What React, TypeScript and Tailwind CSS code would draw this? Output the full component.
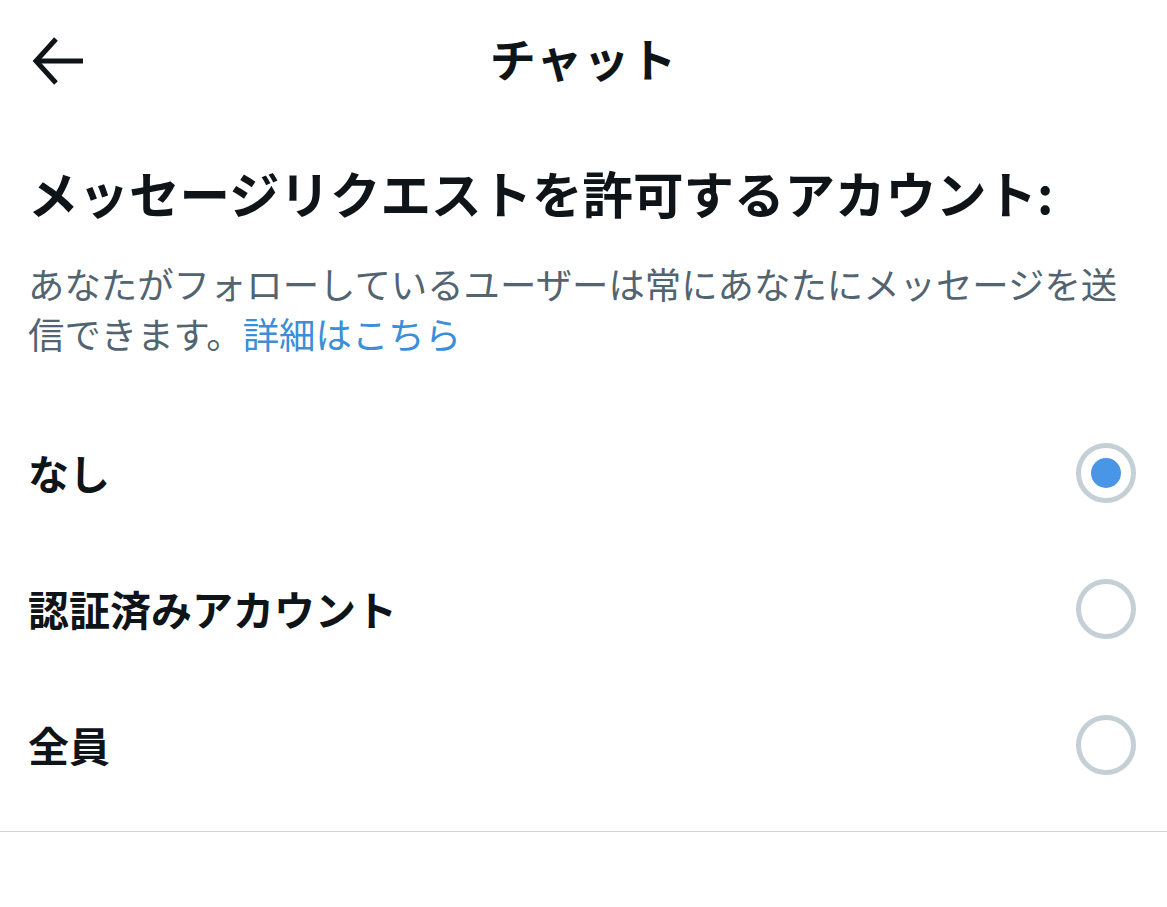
import React from "react";

const options = [
  { label: "なし", checked: true },
  { label: "認証済みアカウント", checked: false },
  { label: "全員", checked: false },
];

function Radio({ checked }: { checked: boolean }) {
  return (
    <div className="w-[60px] h-[60px] rounded-full border-[5.5px] border-[#c4cfd6] flex items-center justify-center">
      {checked && <div className="w-[30px] h-[30px] rounded-full bg-[#4a96e6]" />}
    </div>
  );
}

export default function App() {
  return (
    <div
      className="w-[1167px] h-[907px] bg-white text-[#0f1419] overflow-hidden"
      style={{ fontFamily: '"Noto Sans CJK JP", "Noto Sans", sans-serif' }}
    >
      <header className="relative h-[122px] pb-[8px] flex items-center justify-center">
        <button className="absolute left-[30px] top-[36px] w-[56px] h-[50px] flex items-center justify-center">
          <svg width="56" height="50" viewBox="0 0 56 50" fill="none">
            <path d="M26 3 L6 25 L26 47" stroke="#0f1419" strokeWidth="5" strokeLinecap="butt" strokeLinejoin="miter" />
            <path d="M7 25 H53" stroke="#0f1419" strokeWidth="5" />
          </svg>
        </button>
        <h1 className="text-[46px] font-bold leading-[60px] tracking-[1px]">チャット</h1>
      </header>

      <section className="px-[28px]">
        <h2 className="mt-[40px] text-[50.5px] font-bold leading-[60px]">
          メッセージリクエストを許可するアカウント:
        </h2>
        <p className="mt-[36px] text-[36.4px] leading-[50px] text-[#536471]">
          あなたがフォローしているユーザーは常にあなたにメッセージを送信できます。
          <span className="text-[#3b8ed8]">詳細はこちら</span>
        </p>
      </section>

      <div className="mt-[47px]">
        {options.map((o) => (
          <div key={o.label} className="h-[136px] pl-[28px] pr-[31px] flex items-center justify-between">
            <span className="text-[41px] font-semibold leading-[50px] pb-[3px]">{o.label}</span>
            <Radio checked={o.checked} />
          </div>
        ))}
      </div>

      <div className="mt-[18px] h-px bg-[#d0d4d6]" />
    </div>
  );
}
